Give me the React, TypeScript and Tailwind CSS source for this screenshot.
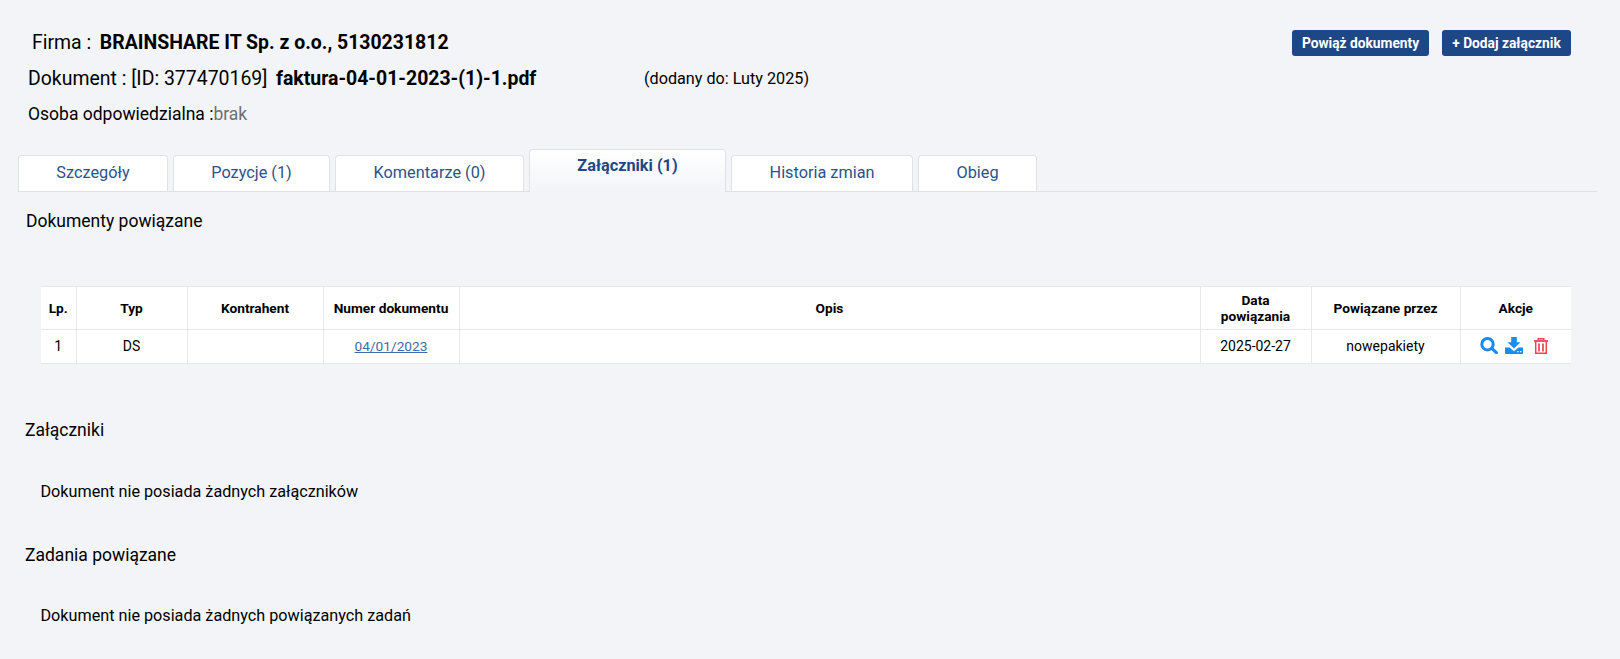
import React from "react";

const tabs = [
  { label: "Szczegóły", w: "w-[150px]" },
  { label: "Pozycje (1)", w: "w-[157px]" },
  { label: "Komentarze (0)", w: "w-[189px]" },
  { label: "Załączniki (1)", w: "w-[197px]", active: true },
  { label: "Historia zmian", w: "w-[182px]" },
  { label: "Obieg", w: "w-[119px]" },
];

const th = "border-r border-[#e8e8e8] font-bold text-[13.7px] leading-[16px] text-black text-center p-0";
const td = "border-r border-[#e8e8e8] text-[14px] text-black text-center p-0";

function SearchIcon() {
  return (
    <svg width="18" height="17" viewBox="0 0 18 17" fill="none" stroke="#1a8cf0">
      <circle cx="7.5" cy="7.2" r="5.7" strokeWidth="3" />
      <path d="M11.8 11.4 L16.3 15.6" strokeWidth="3.2" strokeLinecap="round" />
    </svg>
  );
}

function DownloadIcon() {
  return (
    <svg width="18" height="17" viewBox="0 0 18 17">
      <path fill="#1a8cf0" d="M6.2 0h5.6v5.2H15.5L9 11.6 2.5 5.2h3.7z" />
      <path
        fill="#1a8cf0"
        fillRule="evenodd"
        d="M0 10.6h4.6l4.4 3.6 4.4-3.6H18v5.7a.7.7 0 0 1-.7.7H.7a.7.7 0 0 1-.7-.7zM12.3 14v1.3h1.4V14zM15 14v1.3h1.4V14z"
      />
    </svg>
  );
}

function TrashIcon() {
  return (
    <svg width="14" height="16" viewBox="0 0 14 16" fill="none" stroke="#f2414f">
      <path d="M0 3h14" strokeWidth="1.8" />
      <path d="M4.2 2.6V.7h5.6v1.9" strokeWidth="1.4" />
      <path d="M1.7 3.5v11.8h10.6V3.5" strokeWidth="1.5" />
      <path d="M5 5.5v8M9 5.5v8" strokeWidth="1.7" />
    </svg>
  );
}

export default function App() {
  return (
    <div className="min-h-[659px] bg-[#f2f4f8] text-black overflow-hidden" style={{ fontFamily: "Roboto, sans-serif" }}>
      <div className="flex justify-between pl-[28px] pr-[49px] pt-[30px]">
        <div className="pt-[1px]">
          <div className="pl-[4px] text-[19.45px] leading-[24px] h-[24px] whitespace-pre">
            Firma :  <b className="font-bold -ml-[1px]">BRAINSHARE IT Sp. z o.o., 5130231812</b>
          </div>
          <div className="flex mt-[12px] text-[19.45px] leading-[24px] h-[24px]">
            <span className="w-[248px] whitespace-pre">Dokument : [ID: 377470169]</span>
            <b className="font-bold w-[368px]">faktura-04-01-2023-(1)-1.pdf</b>
            <span className="text-[16.2px]">(dodany do: Luty 2025)</span>
          </div>
          <div className="mt-[11px] text-[17.5px] leading-[24px] h-[24px]">
            Osoba odpowiedzialna :<span className="text-[#6f6f6f]">brak</span>
          </div>
        </div>
        <div className="flex gap-[13px]">
          <button className="w-[137px] h-[26px] rounded-[3px] bg-[#1e4785] text-white text-[13.75px] font-bold">Powiąż dokumenty</button>
          <button className="w-[129px] h-[26px] rounded-[3px] bg-[#1e4785] text-white text-[13.75px] font-bold">+ Dodaj załącznik</button>
        </div>
      </div>

      <div className="mt-[25px] ml-[18px] mr-[23px] h-[41px] flex items-end gap-[5px] border-b border-[#dfe1e5]">
        {tabs.map((t) =>
          t.active ? (
            <div
              key={t.label}
              className={`${t.w} h-[43px] -mb-[1px] pb-[9px] flex items-center justify-center rounded-t-[4px] border border-b-0 border-[#e0e2e6] bg-gradient-to-b from-white to-[#f2f4f8] text-[#1e4785] font-bold text-[16.3px]`}
            >
              {t.label}
            </div>
          ) : (
            <div
              key={t.label}
              className={`${t.w} h-[36px] flex items-center justify-center rounded-t-[4px] border border-b-0 border-[#e0e2e6] bg-white text-[#2d5288] text-[16.3px]`}
            >
              {t.label}
            </div>
          )
        )}
      </div>

      <div className="pl-[26px] pt-[17px] text-[17.5px] leading-[24px]">Dokumenty powiązane</div>

      <div className="ml-[41px] w-[1530px] mt-[53px]">
        <table className="w-[1530px] table-fixed border-collapse bg-white border-y border-[#e8e8e8]">
          <colgroup>
            <col className="w-[35px]" />
            <col className="w-[111px]" />
            <col className="w-[136px]" />
            <col className="w-[136px]" />
            <col className="w-[741px]" />
            <col className="w-[111px]" />
            <col className="w-[149px]" />
            <col className="w-[111px]" />
          </colgroup>
          <thead>
            <tr className="h-[43px] border-b border-[#e8e8e8]">
              <th className={th}>Lp.</th>
              <th className={th}>Typ</th>
              <th className={th}>Kontrahent</th>
              <th className={th}>Numer dokumentu</th>
              <th className={th}>Opis</th>
              <th className={th}>
                Data
                <br />
                powiązania
              </th>
              <th className={th}>Powiązane przez</th>
              <th className="font-bold text-[13.7px] text-black text-center p-0">Akcje</th>
            </tr>
          </thead>
          <tbody>
            <tr className="h-[34px]">
              <td className={td}>1</td>
              <td className={td}>DS</td>
              <td className={td}></td>
              <td className={td}>
                <a className="text-[#3f6ca8] text-[13.7px] underline" href="#">04/01/2023</a>
              </td>
              <td className={td}></td>
              <td className={td}>2025-02-27</td>
              <td className={td}>nowepakiety</td>
              <td className="p-0">
                <div className="flex items-center pl-[19px] pb-[2px]">
                  <SearchIcon />
                  <span className="ml-[7px] flex"><DownloadIcon /></span>
                  <span className="ml-[11px] flex"><TrashIcon /></span>
                </div>
              </td>
            </tr>
          </tbody>
        </table>
      </div>

      <div className="pl-[25px] mt-[54px] text-[17.5px] leading-[24px]">Załączniki</div>
      <div className="pl-[40.5px] mt-[38px] text-[16.2px] leading-[24px]">Dokument nie posiada żadnych załączników</div>
      <div className="pl-[25px] mt-[39px] text-[17.5px] leading-[24px]">Zadania powiązane</div>
      <div className="pl-[40.5px] mt-[37px] text-[16.2px] leading-[24px]">Dokument nie posiada żadnych powiązanych zadań</div>
    </div>
  );
}
